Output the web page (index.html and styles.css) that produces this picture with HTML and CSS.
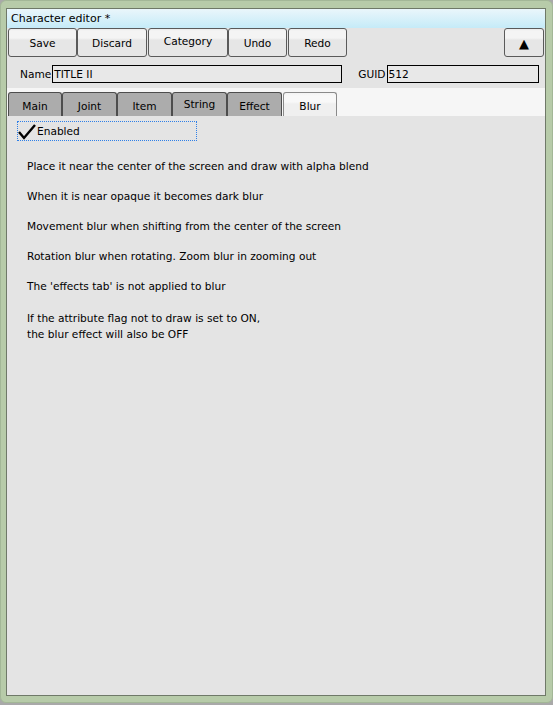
FILE: index.html
```html
<!DOCTYPE html>
<html>
<head>
<meta charset="utf-8">
<link rel="stylesheet" href="styles.css">
</head>
<body>
<div class="window">
  <div class="inner">
    <div class="titlebar">Character editor *</div>
    <div class="toolbar">
      <button class="btn w-save">Save</button>
      <button class="btn w-discard">Discard</button>
      <button class="btn w-category">Category</button>
      <button class="btn w-undo">Undo</button>
      <button class="btn w-redo">Redo</button>
      <span class="spacer"></span>
      <button class="btn w-up">▲</button>
    </div>
    <div class="fields">
      <label class="lbl">Name</label>
      <div class="input name-input">TITLE II</div>
      <label class="lbl guid-lbl">GUID</label>
      <div class="input guid-input">512</div>
    </div>
    <div class="tabstrip">
      <div class="tab t-main">Main</div>
      <div class="tab t-joint">Joint</div>
      <div class="tab t-item">Item</div>
      <div class="tab t-string">String</div>
      <div class="tab t-effect">Effect</div>
      <div class="tab active t-blur">Blur</div>
    </div>
    <div class="content">
      <div class="check">
        <svg class="tick" width="18" height="16" viewBox="0 0 18 16"><path d="M1 8 L6 14 L17 1" fill="none" stroke="#000" stroke-width="2.4"/></svg>
        <span>Enabled</span>
      </div>
      <div class="notes">
        <p>Place it near the center of the screen and draw with alpha blend</p>
        <p>When it is near opaque it becomes dark blur</p>
        <p>Movement blur when shifting from the center of the screen</p>
        <p>Rotation blur when rotating. Zoom blur in zooming out</p>
        <p>The 'effects tab' is not applied to blur</p>
        <p class="last">If the attribute flag not to draw is set to ON,<br>the blur effect will also be OFF</p>
      </div>
    </div>
  </div>
</div>
</body>
</html>
```

FILE: styles.css
```css
* { box-sizing: border-box; }
html, body { margin: 0; padding: 0; }
body {
  width: 553px;
  height: 705px;
  background: #a9a9a9;
  font-family: "DejaVu Sans", "Noto Sans CJK JP", sans-serif;
  font-size: 10.6px;
  color: #000;
}
.window {
  width: 553px;
  height: 703px;
  background: #b7cba9;
  border: 1px solid #a3b797;
  border-radius: 6px;
  padding: 7px 6px 6px 5px;
  display: flex;
}
.inner {
  flex: 1;
  display: flex;
  flex-direction: column;
  border: 1px solid #6f7968;
  background: #e4e4e4;
}
.titlebar {
  height: 19px;
  background: linear-gradient(#eaf6fb, #c5ebf8);
  padding-left: 4px;
  line-height: 19px;
  font-size: 11px;
}
.toolbar {
  display: flex;
  padding: 0 1px 0 1px;
  height: 30px;
  align-items: flex-start;
}
.btn {
  height: 29px;
  font: inherit;
  color: #000;
  border: 1px solid #5a5a5a;
  border-radius: 3px;
  background: linear-gradient(#ececec 0, #f4f4f4 2px, #f4f4f4 9px, #e6e6e6 11px, #e6e6e6 100%);
  padding: 1px 0 0 0;
  margin: 0;
}
.w-save { width: 69px; }
.w-discard { width: 70px; }
.w-category { width: 80px; margin-left: 1px; padding: 0 0 3px 0; }
.w-undo { width: 59px; }
.w-redo { width: 59px; margin-left: 1px; }
.w-up { width: 40px; font-size: 13px; }
.spacer { flex: 1; }
.fields {
  display: flex;
  align-items: center;
  height: 30px;
  padding-top: 2px;
}
.lbl { padding-left: 13px; padding-right: 1px; }
.guid-lbl { padding-left: 16px; }
.input {
  height: 18px;
  border: 1px solid #000;
  background: #e8e8e8;
  line-height: 16px;
  padding-left: 1px;
}
.name-input { width: 290px; }
.guid-input { width: 152px; }
.tabstrip {
  display: flex;
  align-items: flex-end;
  height: 28px;
  background: #f6f6f6;
  padding-left: 1px;
}
.tab {
  height: 24px;
  width: 55px;
  background: #acacac;
  border: 1px solid #4d4d4d;
  border-bottom: none;
  border-radius: 3px 3px 0 0;
  text-align: center;
  line-height: 24px;
  padding-top: 1px;
}
.t-main { width: 54px; }
.t-string { line-height: 20px; }
.tab.active {
  margin-left: 1px;
  width: 54px;
  background: linear-gradient(#f3f3f3 0, #f8f8f8 3px, #f8f8f8 9px, #efefef 11px);
  border-color: #8a8a8a;
}
.content {
  flex: 1;
  padding: 5px 0 0 10px;
}
.check {
  width: 180px;
  height: 20px;
  border: 1px dotted #2f80e8;
  display: flex;
  align-items: center;
  gap: 1px;
}
.tick { margin-top: 2px; }
.notes { padding-left: 10px; padding-top: 17px; }
.notes p { margin: 0 0 14px 0; line-height: 16px; }
.notes p.last { margin-top: 16px; }
```
